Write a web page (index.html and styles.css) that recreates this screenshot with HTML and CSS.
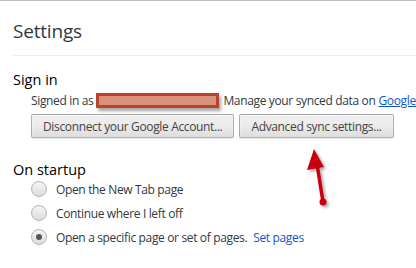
FILE: index.html
```html
<!DOCTYPE html>
<html lang="en">
  <head>
    <meta charset="UTF-8" />
    <title>Settings</title>
    <link rel="stylesheet" href="styles.css">
  </head>
  <body>
    <div id="page">
      <h1>Settings</h1>
      <section class="group">
        <h3>Sign in</h3>
        <div class="sub">
          <div class="line">
            Signed in as <span class="redact"></span>
            Manage your synced data on <a href="#">Google Dashboard</a>
          </div>
          <div class="btns">
            <button>Disconnect your Google Account...</button>
            <button>Advanced sync settings...</button>
          </div>
        </div>
      </section>
      <section class="group startup">
        <h3>On startup</h3>
        <div class="sub">
          <label class="radio"><span class="dot"></span>Open the New Tab page</label>
          <label class="radio"><span class="dot"></span>Continue where I left off</label>
          <label class="radio"><span class="dot on"></span>Open a specific page or set of pages. <a href="#" class="setp">Set pages</a></label>
        </div>
      </section>
      <!-- arrow drawn over the page -->
      <svg class="arrow" width="40" height="70" viewBox="0 0 40 70">
        <defs>
          <filter id="sh" x="-50%" y="-50%" width="200%" height="200%">
            <feDropShadow dx="2" dy="2" stdDeviation="1.5" flood-color="#000" flood-opacity="0.35"/>
          </filter>
        </defs>
        <g filter="url(#sh)" fill="#c8000f" stroke="#c8000f">
          <line x1="23" y1="56" x2="17" y2="18" stroke-width="3.5"/>
          <polygon points="14,3 7,24 24,21" stroke="none"/>
          <circle cx="23" cy="56" r="3.5" stroke="none"/>
        </g>
      </svg>
    </div>
  </body>
</html>
```

FILE: styles.css
```css
body {
  margin: 0;
  border-top: 1px solid #bcbcbc;
  font-family: "Open Sans", "Noto Sans", sans-serif;
  font-size: 12px;
  color: #303942;
  background: white;
  overflow: hidden;
}
#page {
  position: relative;
  padding-left: 13px;
}
h1 {
  margin: 0;
  padding: 17px 0 11px;
  font-size: 19px;
  font-weight: normal;
  border-bottom: 1px solid #eeeeee;
  letter-spacing: -0.2px;
}
h3 {
  margin: 0;
  font-size: 14.5px;
  font-weight: normal;
  color: #000;
}
.group {
  margin-top: 14px;
}
.startup {
  margin-top: 22px;
}
.startup .sub {
  margin-top: -2px;
}
.sub {
  padding-left: 18px;
}
.line {
  margin-top: 3px;
  height: 17px;
  line-height: 17px;
  white-space: nowrap;
  display: flex;
  align-items: center;
  letter-spacing: -0.35px;
}
.redact {
  flex-shrink: 0;
  display: inline-block;
  width: 117px;
  height: 9px;
  margin: 0 4px 0 3px;
  background: #d9917a;
  border: 3px solid #b8432f;
  box-shadow: 2px 3px 3px rgba(0, 0, 0, 0.35);
}
a {
  color: #1155cc;
  margin-left: 3px;
}
.btns {
  display: flex;
  margin-top: 5px;
}
button {
  height: 24px;
  margin-right: 5px;
  padding: 0 11px;
  font-family: inherit;
  font-size: 12px;
  color: #444;
  letter-spacing: -0.35px;
  background: linear-gradient(#ededed, #ededed 38%, #dedede);
  border: 1px solid rgba(0, 0, 0, 0.25);
  border-radius: 2px;
  box-shadow: 0 1px 0 rgba(0, 0, 0, 0.08), inset 0 1px 2px rgba(255, 255, 255, 0.75);
}
.radio {
  display: flex;
  align-items: center;
  height: 24px;
  letter-spacing: -0.35px;
  white-space: nowrap;
}
.dot {
  width: 14px;
  height: 14px;
  border: 1px solid #b5b5b5;
  border-radius: 50%;
  background: linear-gradient(#f4f4f4, #dcdcdc);
  margin-right: 9px;
  position: relative;
}
.dot.on::after {
  content: "";
  position: absolute;
  left: 4px;
  top: 4px;
  width: 6px;
  height: 6px;
  border-radius: 50%;
  background: #555;
}
.setp {
  text-decoration: none;
  margin-left: 6px;
}
.arrow {
  position: absolute;
  left: 300px;
  top: 145px;
}
```
